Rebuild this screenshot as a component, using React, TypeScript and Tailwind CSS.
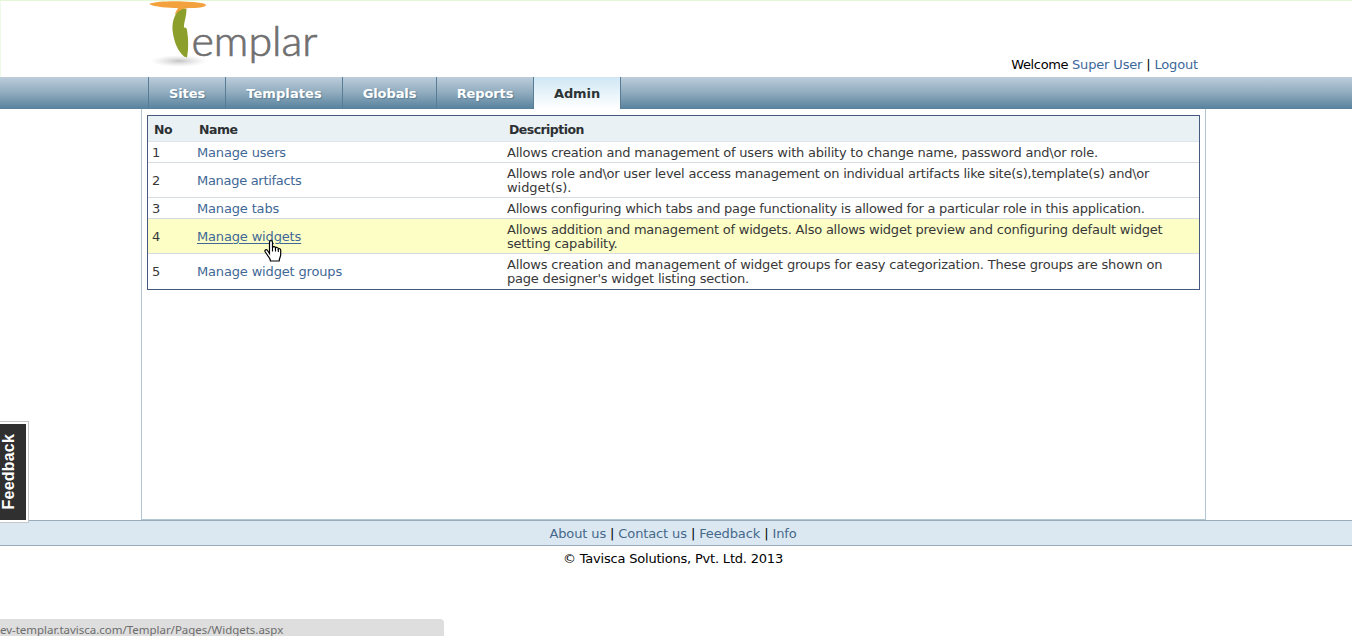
import React from "react";

const tabs = [
  { label: "Sites", box: "w-[77px]", text: "tracking-[-0.1px]" },
  { label: "Templates", box: "w-[117px]", text: "tracking-[0.1px]" },
  { label: "Globals", box: "w-[94px]", text: "tracking-[-0.1px]" },
  { label: "Reports", box: "w-[97px]", text: "tracking-[-0.1px]" },
];

const rows = [
  {
    name: "Manage users",
    nameClass: "tracking-[-0.16px]",
    lines: [{ t: "Allows creation and management of users with ability to change name, password and\\or role.", c: "tracking-[-0.205px]" }],
  },
  {
    name: "Manage artifacts",
    nameClass: "tracking-[-0.3px]",
    lines: [
      { t: "Allows role and\\or user level access management on individual artifacts like site(s),template(s) and\\or", c: "tracking-[-0.225px]" },
      { t: "widget(s).", c: "tracking-[-0.05px]" },
    ],
  },
  {
    name: "Manage tabs",
    nameClass: "tracking-[-0.16px]",
    lines: [{ t: "Allows configuring which tabs and page functionality is allowed for a particular role in this application.", c: "tracking-[-0.265px]" }],
  },
  {
    name: "Manage widgets",
    nameClass: "tracking-[-0.16px]",
    active: true,
    lines: [
      { t: "Allows addition and management of widgets. Also allows widget preview and configuring default widget", c: "tracking-[-0.22px]" },
      { t: "setting capability.", c: "tracking-[-0.22px]" },
    ],
  },
  {
    name: "Manage widget groups",
    nameClass: "tracking-[-0.16px]",
    lines: [
      { t: "Allows creation and management of widget groups for easy categorization. These groups are shown on", c: "tracking-[-0.18px]" },
      { t: "page designer's widget listing section.", c: "tracking-[-0.2px]" },
    ],
  },
];

function Logo() {
  return (
    <svg width="180" height="72" viewBox="0 0 180 72" className="block">
      <defs>
        <radialGradient id="shade">
          <stop offset="0" stopColor="#9a9a9a" stopOpacity=".6" />
          <stop offset="1" stopColor="#ccc" stopOpacity="0" />
        </radialGradient>
      </defs>
      <ellipse cx="39" cy="60" rx="29" ry="6" fill="url(#shade)" />
      <path d="M42 7C35 11 32 20 32.5 29C34 42 38 50 44 55.5L47 56.5C48.7 48 48.5 38 47 29C46.5 26.5 45 26 44 27C43.5 22 46.5 16 46.5 8Z" fill="#8d9f2b" />
      <path d="M9 3C20 -1 53 0 65 3C69 6 58 7 49 7L43 8C40 9 37 11 35 14C35 11 37 9 38 7C29 7 14 6 9 3Z" fill="#f2a13c" />
      <text x="51.5" y="54.5" fontSize="41" fill="#706f70" stroke="#706f70" strokeWidth=".7" textLength="126" lengthAdjust="spacingAndGlyphs" className="font-['Lato'] font-light">
        emplar
      </text>
    </svg>
  );
}

function HandCursor() {
  return (
    <svg width="18" height="22" viewBox="0 0 18 22" className="absolute left-[67px] top-[10px]">
      <path
        d="M5.5 13.5V2C5.5 .2 8.5 .2 8.5 2V7.5C9 6.2 11.5 6.4 11.5 8C12.3 7 14.3 7.3 14.3 9C15.2 8.2 16.7 8.7 16.7 10V14.5C16.7 17 15.2 18 15.2 21H6.5C6.5 18.5 4.5 17 3 14.5L1 11.5C.5 10 2.4 9 3.5 10.5Z"
        fill="white"
        stroke="black"
        strokeWidth="1.2"
      />
      <path d="M8.5 7V11.5M11.5 8V11.5M14.3 9V12" stroke="black" strokeWidth="1.1" />
    </svg>
  );
}

export default function App() {
  return (
    <div className="relative flex h-[636px] w-[1352px] flex-col overflow-hidden border-t border-t-[#e5f8d6] bg-white font-['DejaVu_Sans',sans-serif] text-[13px] leading-[14px] text-black">
      <header className="flex h-[76px] shrink-0 justify-between border-l border-[#eefae8] pl-[139px] pr-[154px]">
        <Logo />
        <div className="whitespace-pre pt-[57px] tracking-[-0.16px]">
          <span className="tracking-[-0.35px]">Welcome </span>
          <a className="text-[#3c689b]">Super User</a> | <a className="text-[#3c689b]">Logout</a>
        </div>
      </header>
      <nav className="flex h-8 shrink-0 bg-linear-to-b from-[#bdcddb] via-[#8fabbd] to-[#57819d] pl-[148px] text-[13px] font-bold text-white">
        {tabs.map((t) => (
          <div key={t.label} className={`${t.box} flex items-center justify-center border-l border-[#587c96] pt-px`}>
            <span className={`${t.text} [text-shadow:1px_1px_1px_#5c7f95]`}>{t.label}</span>
          </div>
        ))}
        <div className="flex w-[88px] items-center justify-center border-x border-[#587c96] bg-linear-to-b from-[#cfe7f4] to-white pt-px text-[#2d3436]">
          <span className="tracking-[-0.1px]">Admin</span>
        </div>
      </nav>
      <main className="ml-[141px] h-[411px] w-[1065px] shrink-0 border border-t-0 border-[#b3c6d3] px-[5px] pt-[6px]">
        <div className="border border-[#465a80] text-[#383838]">
          <div className="flex h-[26px] items-center border-b border-[#dde6ec] bg-[#eaf1f5] pt-0.5 text-[12.5px] font-bold text-[#2c3033]">
            <span className="w-[51px] pl-1.5">
              <span className="tracking-[-0.5px]">No</span>
            </span>
            <span className="w-[310px] tracking-[-0.5px]">Name</span>
            <span className="tracking-[-0.55px]">Description</span>
          </div>
          {rows.map((r, i) => (
            <div
              key={r.name}
              className={`flex items-center border-[#d5dce2] pt-[4px] ${i < 4 ? "border-b pb-[2px]" : "pb-[3px]"} ${r.active ? "bg-[#fcfec6]" : ""}`}
            >
              <span className="w-[49px] pl-1">{i + 1}</span>
              <span className="relative w-[310px]">
                <a className={`${r.nameClass} text-[#3f6896] ${r.active ? "underline underline-offset-2" : ""}`}>{r.name}</a>
                {r.active && <HandCursor />}
              </span>
              <span className="whitespace-nowrap">
                {r.lines.map((l) => (
                  <span key={l.t} className={`block ${l.c}`}>
                    {l.t}
                  </span>
                ))}
              </span>
            </div>
          ))}
        </div>
      </main>
      <footer className="flex shrink-0 flex-col items-center">
        <div className="flex h-[26px] w-full items-center justify-center whitespace-pre border-y border-[#9aacb9] bg-[#dce8f1] pr-[6px] pt-0.5 tracking-[-0.12px]">
          <a className="text-[#44698c]">About us</a> | <a className="text-[#44698c]">Contact us</a> | <a className="text-[#44698c]">Feedback</a> |{" "}
          <a className="text-[#44698c]">Info</a>
        </div>
        <p className="pr-[6px] pt-[6px] tracking-[-0.2px]">© Tavisca Solutions, Pvt. Ltd. 2013</p>
      </footer>
      <div className="absolute left-0 top-[420px] flex h-[102px] w-[29px] border border-l-0 border-[#c5c8ca] bg-white py-[2px] pr-[2px]">
        <div className="flex w-full items-center justify-center bg-[#303030] pr-[9px]">
          <span className="rotate-180 font-['Liberation_Sans',sans-serif] text-[16px] font-bold tracking-[0.2px] text-white [writing-mode:vertical-rl]">Feedback</span>
        </div>
      </div>
      <div className="absolute left-0 top-[618px] h-[18px] w-[444px] overflow-hidden whitespace-nowrap rounded-tr bg-[#dedede] pt-[3px] font-['Noto_Sans',sans-serif] text-[11.5px] leading-[15px] tracking-[-0.02px] text-[#6c6c6c]">
        ev-templar.tavisca.com/Templar/Pages/Widgets.aspx
      </div>
    </div>
  );
}
